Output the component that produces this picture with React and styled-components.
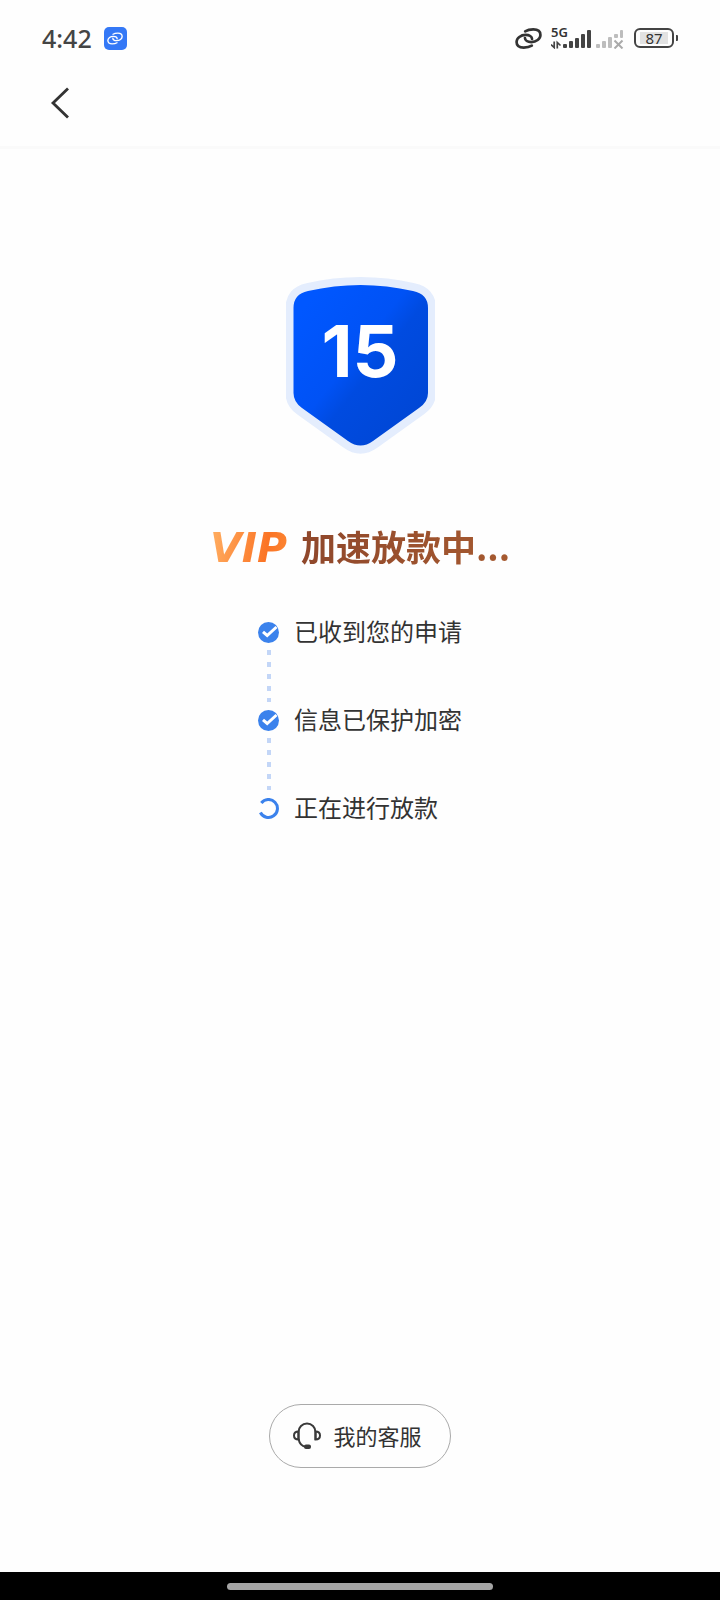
import React from 'react'
import styled, { createGlobalStyle } from 'styled-components'

const GlobalStyle = createGlobalStyle`
  body {
    margin: 0;
    background: #fefefe;
    color: #333;
    font-family: 'Noto Sans', 'Noto Sans CJK SC', sans-serif;
  }
`
const Page = styled.div`
  display: flex;
  flex-direction: column;
  min-height: 100vh;
`
const StatusBar = styled.div`
  display: flex;
  align-items: center;
  justify-content: space-between;
  height: 76px;
  padding: 0 42px;
  box-sizing: border-box;
`
const StatusGroup = styled.div`
  display: flex;
  align-items: center;
  gap: ${props => props.$gap}px;
`
const Time = styled.span`
  font-size: 25px;
  line-height: 32px;
  font-weight: 500;
  color: #444;
`
const Signal = styled.div`
  display: flex;
  flex-direction: column;
`
const Network = styled.span`
  font-size: 13px;
  line-height: 10px;
  font-weight: 600;
`
const Bars = styled.svg`
  display: block;
  margin-top: -8px;
`
const Battery = styled.div`
  display: flex;
  align-items: center;
  gap: 2px;

  &::after {
    content: '';
    width: 2px;
    height: 6px;
    border-radius: 0 1px 1px 0;
    background: #444;
  }
`
const BatteryLevel = styled.span`
  width: 36px;
  height: 16px;
  border: 2px solid #444;
  border-radius: 6px;
  background: linear-gradient(#e2e2e2, #e2e2e2) center / 28px 12px no-repeat;
  font-size: 15px;
  line-height: 16px;
  text-align: center;
`
const NavBar = styled.header`
  display: flex;
  align-items: center;
  height: 70px;
  padding: 0 42px 0 40px;
  border-bottom: 3px solid #fafafa;
`
const BackButton = styled.button`
  display: flex;
  padding: 0 10px;
  margin-bottom: 16px;
  border: 0;
  background: none;
`
const Main = styled.main`
  display: flex;
  flex: 1;
  flex-direction: column;
  align-items: center;
  padding-top: 127px;
`
const Shield = styled.div`
  display: grid;
  justify-items: center;

  > * {
    grid-area: 1 / 1;
  }
`
const Count = styled.span`
  z-index: 1;
  padding-top: 25px;
  color: #fff;
  font-family: Inter, sans-serif;
  font-size: 72px;
  line-height: 100px;
  font-weight: 700;
`
const Title = styled.h1`
  display: flex;
  align-items: center;
  gap: 12px;
  margin: 62px 0 0;
  font-family: 'Noto Sans CJK SC', sans-serif;
  font-size: 35px;
  line-height: 52px;
  font-weight: 700;
`
const Vip = styled.span`
  padding: 4px 2px 0 0;
  background: linear-gradient(100deg, #ffa95c 10%, #fb7425 70%, #fc8a35);
  background-clip: text;
  color: transparent;
  font-family: 'DejaVu Sans', sans-serif;
  font-size: 41px;
  font-style: italic;
`
const TitleText = styled.span`
  background: linear-gradient(90deg, #8f472b, #a65a30);
  background-clip: text;
  color: transparent;
`
const Steps = styled.ol`
  margin: 40px 0 0;
  padding: 0;
  list-style: none;
`
const Step = styled.li`
  display: grid;
  grid-template-columns: 21px auto;
  grid-template-rows: 36px 52px;
  column-gap: 15px;
  align-items: center;
  justify-items: center;
  font-family: 'Noto Sans CJK SC', sans-serif;
  font-size: 24px;
  line-height: 34px;

  &:not(:last-child)::after {
    content: '';
    width: 4px;
    height: 52px;
    background: repeating-linear-gradient(#c3d6f7 0 5px, transparent 5px 12px);
  }
`
const StepText = styled.span`
  justify-self: start;
  padding-bottom: 2px;
`
const Footer = styled.footer`
  display: flex;
  justify-content: center;
  padding-bottom: 104px;
`
const ServiceButton = styled.button`
  display: flex;
  align-items: center;
  gap: 12px;
  height: 64px;
  padding: 0 28px 0 23px;
  border: 1px solid #aaa;
  border-radius: 32px;
  background: none;
  color: #333;
  font-family: 'Noto Sans CJK SC', sans-serif;
  font-size: 22px;
  line-height: 32px;
`
const ServiceText = styled.span`
  padding-bottom: 3px;
`
const HomeBar = styled.div`
  display: flex;
  align-items: center;
  justify-content: center;
  height: 28px;
  background: #000;

  &::after {
    content: '';
    width: 37%;
    height: 7px;
    border-radius: 4px;
    background: #a5a5a5;
  }
`

const LinkIcon = ({ width, height, stroke }) => (
  <svg width={width} height={height} viewBox="0 0 28 22" fill="none" stroke="currentColor" strokeWidth={stroke} strokeLinecap="round">
    <path d="M10.500 3.500C13 2 16 1.500 19 1.500C24 1.500 26.500 4 26.500 7.300C26.500 11.500 22 14.800 17 14.800C13 14.800 10.300 13 10.300 10.500" />
    <path d="M17.500 18.500C15 20 12 20.500 9 20.500C4 20.500 1.500 18 1.500 14.700C1.500 10.500 6 7.200 11 7.200C15 7.200 17.700 9 17.700 11.500" />
  </svg>
)

const LinkBadge = styled.span`
  display: flex;
  align-items: center;
  justify-content: center;
  width: 23px;
  height: 23px;
  border-radius: 5px;
  background: #3478f6;
  color: #fff;
`

const SignalBars = () => (
  <Bars width="74" height="20" viewBox="0 0 74 20">
    <g fill="none" stroke="#444" strokeWidth="1.700">
      <path d="M3.200 12.500V18.500L0 15.500" />
      <path d="M6.300 19.500V13.500L9.500 16.500" />
    </g>
    <g fill="#444">
      <rect x="12" y="15" width="4" height="4" rx="1" />
      <rect x="18" y="12" width="4" height="7" rx="1" />
      <rect x="24" y="9" width="4" height="10" rx="1" />
      <rect x="30" y="5" width="4" height="14" rx="1" />
      <rect x="36" y="1" width="4" height="18" rx="1" />
    </g>
    <g fill="#bdbdbd">
      <rect x="45" y="15" width="4" height="4" rx="1" />
      <rect x="51" y="12" width="4" height="7" rx="1" />
      <rect x="57" y="8" width="4" height="11" rx="1" />
      <rect x="63" y="5" width="4" height="4" rx="1" />
      <rect x="69" y="1" width="3" height="8" rx="1" />
    </g>
    <path d="M63.500 11.500L71.500 19.500M71.500 11.500L63.500 19.500" stroke="#aaa" strokeWidth="2" />
  </Bars>
)

const ShieldShape = () => {
  const d =
    'M8.500 32Q8.500 18 23 15Q75.500 3 128 15Q143 18 143 32V117Q143 126 134 132L88 165Q75.500 174 63 165L17 132Q8.500 126 8.500 117Z'
  return (
    <svg width="149" height="180" viewBox="1 0 149 180">
      <defs>
        <linearGradient id="shield" gradientUnits="userSpaceOnUse" x1="20" y1="30" x2="140" y2="125">
          <stop offset="0" stopColor="#0057ff" />
          <stop offset="0.45" stopColor="#0052f5" />
          <stop offset="0.6" stopColor="#004be0" />
          <stop offset="1" stopColor="#0047d6" />
        </linearGradient>
      </defs>
      <path d={d} fill="#e4edfd" stroke="#e4edfd" strokeWidth="16" />
      <path d={d} fill="url(#shield)" />
    </svg>
  )
}

const DoneIcon = () => (
  <svg width="21" height="21" viewBox="0 0 21 21">
    <circle cx="10.500" cy="10.500" r="10.500" fill="#3b82ec" />
    <path d="M5 9.800L9.200 13.500L18.500 5" fill="none" stroke="#fff" strokeWidth="3" />
  </svg>
)

const LoadingIcon = () => (
  <svg width="21" height="21" viewBox="0 0 21 21" fill="none" stroke="#3b82ec" strokeWidth="3">
    <path d="M3.300 5A9 9 0 1 1 2.400 14.500" />
  </svg>
)

const HeadsetIcon = () => (
  <svg width="28" height="28" viewBox="0 0 28 28" fill="none" stroke="#3a3a3a" strokeWidth="2">
    <path d="M5.500 18V10A8.500 8.500 0 0 1 22.500 10V18" />
    <path d="M5.500 9.500C2.500 9.500 1 11 1 13.500S2.500 17.500 5.500 17.500Z" />
    <path d="M22.500 9.500C25.500 9.500 27 11 27 13.500S25.500 17.500 22.500 17.500Z" />
    <path d="M5.500 17C6.500 21.500 9 24.500 13 24.800" />
    <rect x="12" y="23.500" width="5" height="2.500" rx="1" fill="#3a3a3a" />
  </svg>
)

const steps = [
  { text: '已收到您的申请', done: true },
  { text: '信息已保护加密', done: true },
  { text: '正在进行放款', done: false },
]

const App = () => (
  <Page>
    <GlobalStyle />
    <StatusBar>
      <StatusGroup $gap={12}>
        <Time>4:42</Time>
        <LinkBadge>
          <LinkIcon width={16} height={13} stroke={2.4} />
        </LinkBadge>
      </StatusGroup>
      <StatusGroup $gap={9}>
        <LinkIcon width={27} height={21} stroke={2.8} />
        <Signal>
          <Network>5G</Network>
          <SignalBars />
        </Signal>
        <Battery>
          <BatteryLevel>87</BatteryLevel>
        </Battery>
      </StatusGroup>
    </StatusBar>
    <NavBar>
      <BackButton type="button" aria-label="返回">
        <svg width="20" height="32" viewBox="0 0 20 32" fill="none" stroke="#333" strokeWidth="2.800">
          <path d="M18 1.500L3 16L18 30.500" />
        </svg>
      </BackButton>
    </NavBar>
    <Main>
      <Shield>
        <ShieldShape />
        <Count>15</Count>
      </Shield>
      <Title>
        <Vip>VIP</Vip>
        <TitleText>加速放款中...</TitleText>
      </Title>
      <Steps>
        {steps.map(step => (
          <Step key={step.text}>
            {step.done ? <DoneIcon /> : <LoadingIcon />}
            <StepText>{step.text}</StepText>
          </Step>
        ))}
      </Steps>
    </Main>
    <Footer>
      <ServiceButton type="button">
        <HeadsetIcon />
        <ServiceText>我的客服</ServiceText>
      </ServiceButton>
    </Footer>
    <HomeBar />
  </Page>
)

export default App
